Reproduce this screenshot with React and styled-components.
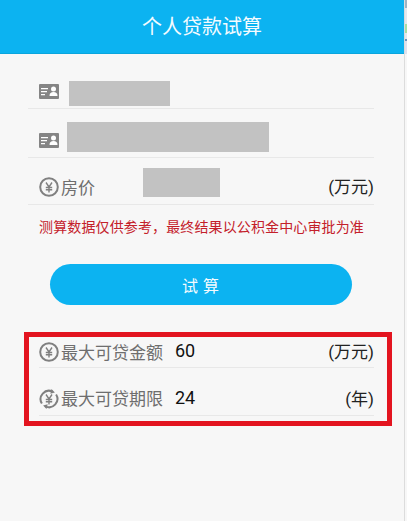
import React from 'react';
import styled, { createGlobalStyle } from 'styled-components';

const GlobalStyle = createGlobalStyle`
  html, body {
    margin: 0;
    padding: 0;
    background: #fff;
  }
  body {
    font-family: Roboto, "Noto Sans CJK SC", sans-serif;
  }
`;

const YuanGlyph = () => (
  <path d="M7 5.500l3 4.500 3-4.500M6.800 10.500h6.400M6.800 12.800h6.400M10 10v5.500" stroke="#808080" strokeWidth="1.400" />
);

const YuanIcon = ({ cycle }) => (
  <svg width="20" height="20" viewBox="0 0 20 20" fill="none">
    {cycle ? (
      <>
        <path d="M2.900 14.500A8.300 8.300 0 0 1 13.500 2.600" stroke="#808080" strokeWidth="2" />
        <path d="M17.100 5.500A8.300 8.300 0 0 1 6.500 17.400" stroke="#808080" strokeWidth="2" />
        <path d="M12.500 0l3.400 3.400-4.600 1.400zM7.500 20l-3.400-3.400 4.600-1.400z" fill="#808080" />
      </>
    ) : (
      <circle cx="10" cy="10" r="8.800" stroke="#808080" strokeWidth="2" />
    )}
    <YuanGlyph />
  </svg>
);

const CardIcon = () => (
  <svg width="20" height="15" viewBox="0 0 20 15">
    <rect width="20" height="15" rx="1" fill="#858585" />
    <path d="M2 4h7v1.300H2zM2 7h6v1.300H2zM2 10h4v1.300H2z" fill="#fff" />
    <circle cx="14.500" cy="5" r="2.500" fill="#fff" />
    <path d="M10.500 12c0-3 1.500-4 4-4s4 1 4 4z" fill="#fff" />
  </svg>
);

const Page = styled.div`
  display: flex;
  width: 407px;
  height: 521px;
  overflow: hidden;
`;

const Main = styled.div`
  width: 404px;
  background: #f7f7f7;
`;

const Edge = styled.div`
  width: 3px;
  box-sizing: border-box;
  border-left: 1px solid #dcdcdc;
  background: linear-gradient(
    #9fb4c4 0 8px,
    #e4e8ee 8px 24px,
    #a9dca6 24px 33px,
    #e4e8ee 33px 39px,
    #6d93b8 39px 41px,
    #dfe2ee 41px 54px,
    #f7f7f7 54px
  );
`;

const Header = styled.header`
  height: 54px;
  box-sizing: border-box;
  padding-bottom: 2px;
  background: #0cb3f1;
  border-bottom: 1px solid #0aa5dd;
  color: #f4fbff;
  font-size: 20px;
  display: flex;
  align-items: center;
  justify-content: center;
`;

const Form = styled.div`
  display: flex;
  flex-direction: column;
  padding: 0 30px 0 28px;
`;

const Row = styled.div`
  height: ${p => p.$h}px;
  box-sizing: border-box;
  display: flex;
  align-items: center;
  border-bottom: 1px solid #e8e8e8;
  padding: ${p => p.$top || 0}px 0 0 ${p => p.$pad || 0}px;
`;

const Mask = styled.div`
  align-self: flex-end;
  flex: none;
  width: ${p => p.$w}px;
  height: ${p => p.$h}px;
  margin: 0 0 ${p => p.$mb}px ${p => p.$ml}px;
  background: #c2c2c2;
`;

const Label = styled.span`
  color: #6e6e6e;
  font-size: 17px;
  margin: 0 0 2px 2px;
  white-space: nowrap;
`;

const Value = styled.span`
  color: #111;
  font-size: 18px;
  margin: 0 0 3px 12px;
`;

const Unit = styled.span`
  color: #222;
  font-size: 17px;
  margin: 0 0 3px auto;
  white-space: nowrap;
`;

const Notice = styled.p`
  margin: 13px 0 0;
  color: #c4202a;
  font-size: 14px;
  letter-spacing: 0.13px;
  line-height: 19px;
  padding-left: 11px;
  white-space: nowrap;
`;

const CalcButton = styled.button`
  display: block;
  width: 302px;
  height: 41px;
  margin: 27px 0 0 22px;
  padding: 0 0 0 4px;
  border: 0;
  border-radius: 21px;
  background: #0cb3f1;
  color: #f4fbff;
  font: inherit;
  font-size: 16px;
  letter-spacing: 5px;
`;

const ResultBox = styled.div`
  width: 368px;
  height: 94px;
  box-sizing: border-box;
  margin: 27px 0 0 -4px;
  border: 5px solid #e3141f;
  padding: 0 13px 0 10px;
`;

export default function App() {
  return (
    <Page>
      <GlobalStyle />
      <Main>
        <Header>个人贷款试算</Header>
        <Form>
          <Row $h={55} $top={21} $pad={11}>
            <CardIcon />
            <Mask $w={101} $h={25} $ml={10} $mb={2} />
          </Row>
          <Row $h={49} $top={14} $pad={11}>
            <CardIcon />
            <Mask $w={202} $h={30} $ml={8} $mb={5} />
          </Row>
          <Row $h={47} $top={12} $pad={11}>
            <YuanIcon />
            <Label>房价</Label>
            <Mask $w={77} $h={29} $ml={48} $mb={7} />
            <Unit>(万元)</Unit>
          </Row>
          <Notice>测算数据仅供参考，最终结果以公积金中心审批为准</Notice>
          <CalcButton>试算</CalcButton>
          <ResultBox>
            <Row $h={31}>
              <YuanIcon />
              <Label>最大可贷金额</Label>
              <Value>60</Value>
              <Unit>(万元)</Unit>
            </Row>
            <Row $h={48} $top={14}>
              <YuanIcon cycle />
              <Label>最大可贷期限</Label>
              <Value>24</Value>
              <Unit>(年)</Unit>
            </Row>
          </ResultBox>
        </Form>
      </Main>
      <Edge />
    </Page>
  );
}
